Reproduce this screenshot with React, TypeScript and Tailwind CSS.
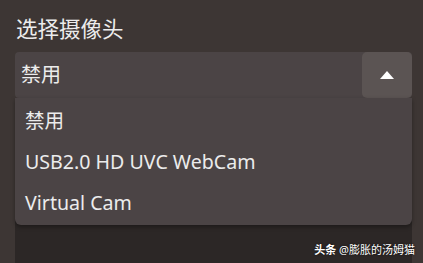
import React from 'react';

const OPTIONS = ['禁用', 'USB2.0 HD UVC WebCam', 'Virtual Cam'];

const font = { fontFamily: '"Noto Sans", "Noto Sans CJK SC", sans-serif' };

const App: React.FC = () => {
  return (
    <div
      className="relative w-[423px] h-[263px] overflow-hidden bg-[#3d3634] flex flex-col pl-[15px] pr-[11px] text-[#ececec]"
      style={font}
    >
      {/* Title */}
      <div className="pt-[14px] mb-[8px] pl-[1px] text-[21.5px] leading-[30px]">选择摄像头</div>

      {/* Select */}
      <div className="relative">
        <div className="flex h-[46px] rounded-[4px] bg-[#4b4445]">
          <div className="flex-1 flex items-center pl-[6px] text-[20px]">禁用</div>
          <button className="w-[50px] h-full rounded-[5px] bg-[#5b5453] flex items-center justify-center">
            <svg width="16" height="10" viewBox="0 0 16 10">
              <polygon points="8,1 15,9 1,9" fill="#ffffff" />
            </svg>
          </button>
        </div>

        {/* Open menu */}
        <div className="absolute left-0 right-0 top-full z-10 pt-[2px] pb-[2px] rounded-b-[6px] bg-[#4b4445] shadow-[0_2px_4px_rgba(0,0,0,0.35)]">
          {OPTIONS.map(o => (
            <div key={o} className="h-[41px] flex items-center pl-[10px] text-[19.6px] whitespace-nowrap">
              {o}
            </div>
          ))}
        </div>
      </div>

      {/* Content behind the menu */}
      <div className="flex-1 bg-[#2c2726]"></div>

      {/* Watermark */}
      <div className="absolute right-[8px] bottom-[6px] z-20 text-[11px] leading-[14px] text-white [text-shadow:0_0_2px_rgba(0,0,0,0.8)]">
        <span className="font-bold">头条</span> @膨胀的汤姆猫
      </div>
    </div>
  );
};

export default App;
